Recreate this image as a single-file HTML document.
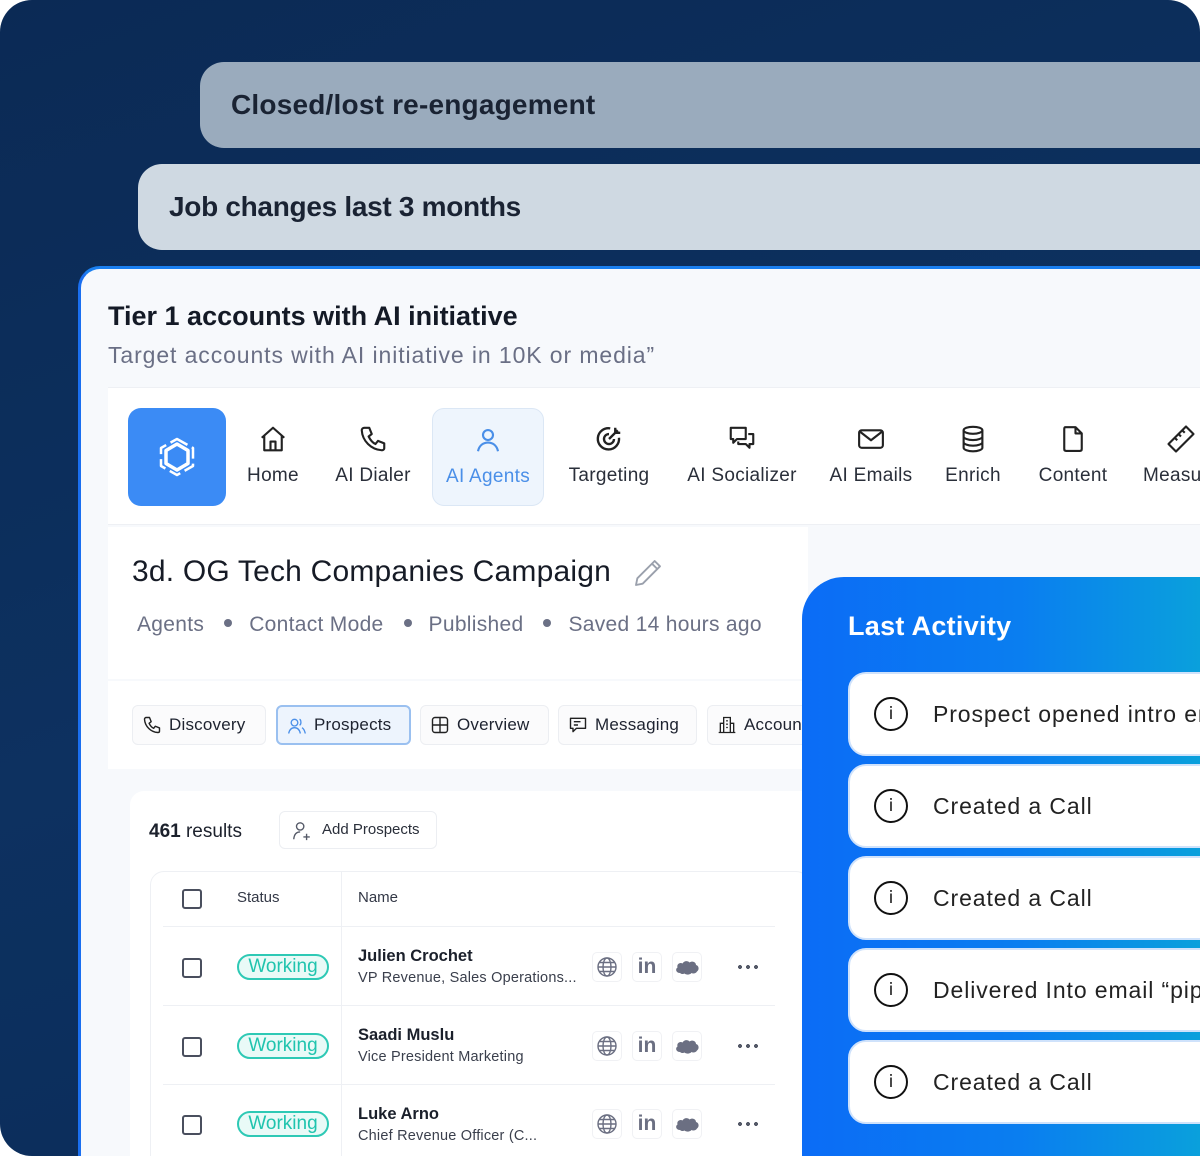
<!DOCTYPE html>
<html><head><meta charset="utf-8">
<style>
*{box-sizing:border-box;margin:0;padding:0}
body{width:1200px;height:1156px;overflow:hidden;background:#fff;font-family:"Liberation Sans",sans-serif;position:relative}
.frame{position:absolute;left:0;top:0;width:1200px;height:1156px;border-radius:32px;background:linear-gradient(160deg,#0b2a55 0%,#0d3160 50%,#0a2b58 100%);overflow:hidden}
.pill{position:absolute;height:86px;border-radius:24px 0 0 24px;font-size:28px;font-weight:700;color:#1a2333;padding-left:31px;line-height:86px;letter-spacing:0.2px}
.p1{left:200px;top:62px;width:1000px;background:#9aabbd}
.p2{left:138px;top:164px;width:1062px;background:#cfd9e2;letter-spacing:-0.3px}
.card{position:absolute;left:78px;top:266px;width:1122px;height:890px;border-radius:22px 0 0 0;background:#f7f9fc;border-left:3px solid #1a6ff0;border-top:3px solid #1a7ff0;overflow:hidden}
.t1{position:absolute;left:27px;top:32px;font-size:27px;font-weight:700;color:#141a26;letter-spacing:0px}
.t2{position:absolute;left:27px;top:73px;font-size:23px;color:#6a6f85;letter-spacing:0.9px}
.nav{position:absolute;left:27px;top:118px;width:1095px;height:138px;background:#fff;border-top:1px solid #eef0f4;border-bottom:1px solid #eef0f4;overflow:hidden}
.logo{position:absolute;left:20px;top:20px;width:98px;height:98px;border-radius:13px;background:#3b8bf5}
.ni{position:absolute;top:20px;height:98px;text-align:center;font-size:19px;color:#2a2f3a;letter-spacing:0.3px}
.ni svg{position:absolute;top:16px;left:50%;margin-left:-15px;width:30px;height:30px}
.ni span{position:absolute;top:57px;left:0;right:0;white-space:nowrap}
.act{background:#eef5fd;border:1px solid #dbe7f5;border-radius:12px;color:#4a8fe8}
.sec{position:absolute;left:27px;top:258px;width:700px;height:152px;background:#fff}
.ct{position:absolute;left:24px;top:28px;font-size:30px;font-weight:500;color:#161b26;letter-spacing:0.2px}
.meta{position:absolute;left:29px;top:86px;font-size:21px;color:#6b7085;white-space:nowrap;letter-spacing:0.3px}
.meta b{display:inline-block;width:8px;height:8px;border-radius:50%;background:#6b7085;margin:0 17px 0 20px;vertical-align:middle;position:relative;top:-2px}
.tabs{position:absolute;left:27px;top:412px;width:700px;height:88px;background:#fff}
.tab{position:absolute;top:24px;height:40px;border:1px solid #eceef2;border-radius:6px;background:#fbfbfc;font-size:17px;color:#1e2330;line-height:38px;padding-left:36px;white-space:nowrap;overflow:hidden;letter-spacing:0.2px}
.tab svg{position:absolute;left:9px;top:9px;width:20px;height:20px}
.tab.on{background:#edf4fd;border:2px solid #9ac0f0;line-height:36px}
.res{position:absolute;left:49px;top:522px;width:700px;height:368px;background:#fff;border-radius:14px 14px 0 0;overflow:hidden}
.rc{position:absolute;left:19px;top:30px;font-size:19px;color:#1c212c}
.addb{position:absolute;left:149px;top:20px;width:158px;height:38px;border:1px solid #eceef2;border-radius:6px;font-size:15px;color:#2a2f3a;line-height:36px;padding-left:42px}
.tbl{position:absolute;left:20px;top:80px;width:660px;height:400px;border:1px solid #eef0f4;border-radius:14px}
.cb{position:absolute;left:31px;width:20px;height:20px;border:2px solid #4a4f5e;border-radius:3px}
.hl{position:absolute;left:12px;width:612px;height:1px;background:#eef0f4}
.vl{position:absolute;left:190px;top:0;width:1px;height:400px;background:#eef0f4}
.wk{position:absolute;left:86px;width:92px;height:26px;border:2px solid #2ec9b5;border-radius:13px;background:#e9faf7;color:#20c4ae;font-size:19px;text-align:center;line-height:22px}
.nm{position:absolute;left:207px;font-size:16.5px;color:#1b202b;font-weight:700}
.sb{position:absolute;left:207px;font-size:14.5px;color:#3a3f4c;white-space:nowrap;letter-spacing:0.2px}
.ic{position:absolute;width:30px;height:30px;border:1px solid #f0f1f4;border-radius:5px;text-align:center}
.dt{position:absolute;left:146px;top:13px;width:20px;height:4px;background:radial-gradient(circle 2px at 2px 2px,#555a68 98%,transparent) 0 0/8px 4px repeat-x}
.la{position:absolute;left:802px;top:577px;width:398px;height:579px;border-radius:42px 0 0 0;background:linear-gradient(90deg,#0b6cf6 0%,#0a7ef0 55%,#0aa0dc 100%);overflow:hidden}
.lat{position:absolute;left:46px;top:34px;color:#fff;font-size:27px;font-weight:700;letter-spacing:0.3px}
.ac{position:absolute;left:46px;width:380px;height:84px;background:#fff;border-radius:18px;border:2px solid #cfe2fb;font-size:23px;color:#222;line-height:80px;padding-left:83px;white-space:nowrap;letter-spacing:0.9px;overflow:hidden}
.ac i{position:absolute;left:24px;top:23px;width:34px;height:34px;border:2px solid #111;border-radius:50%;font-style:normal;font-size:17px;line-height:30px;text-align:center;padding-left:0;color:#111;font-family:"DejaVu Sans",sans-serif;letter-spacing:0}
</style></head><body>
<div class="frame">
<div class="pill p1">Closed/lost re-engagement</div>
<div class="pill p2">Job changes last 3 months</div>
</div>
<div class="card">
<div class="t1">Tier 1 accounts with AI initiative</div>
<div class="t2">Target accounts with AI initiative in 10K or media”</div>
<div class="nav">
 <div class="logo"><svg width="98" height="98" viewBox="0 0 98 98"><g fill="none" stroke="#fff" stroke-width="3.5" stroke-linejoin="round"><polygon points="49,36 60,42.5 60,55.5 49,62 38,55.5 38,42.5"/><polygon points="49,31 65,40 65,58 49,67 33,58 33,40" stroke-width="2.5" stroke-dasharray="12 5"/></g></svg></div>
 <div class="ni" style="left:126px;width:78px"><svg viewBox="0 0 24 24" fill="none" stroke="#222" stroke-width="1.7" stroke-linejoin="round"><path d="M3 11 L12 3 L21 11 M5 9.5 V21 H19 V9.5 M10 21 V14 H14 V21"/></svg><span>Home</span></div>
 <div class="ni" style="left:222px;width:86px"><svg viewBox="0 0 24 24" fill="none" stroke="#222" stroke-width="1.7" stroke-linejoin="round"><path d="M5 3 L9 3 L11 8 L8.5 10 C10 13 11.5 15 14 16 L16 13.5 L21 15.5 V19.5 C21 20.5 20 21 19 21 C10.5 20.5 3.5 13.5 3 5 C3 4 4 3 5 3Z"/></svg><span>AI Dialer</span></div>
 <div class="ni act" style="left:324px;width:112px"><svg viewBox="0 0 24 24" fill="none" stroke="#4a8fe8" stroke-width="1.7"><circle cx="12" cy="8" r="4"/><path d="M4 21 C5 16 8.5 14 12 14 C15.5 14 19 16 20 21"/></svg><span>AI Agents</span></div>
 <div class="ni" style="left:456px;width:90px"><svg viewBox="0 0 24 24" fill="none" stroke="#222" stroke-width="1.9"><path d="M20 11 A8.5 8.5 0 1 1 13 3.5"/><path d="M16 12 A4 4 0 1 1 12 8"/><path d="M12 12 L19 5 M17 3 V7 H21"/></svg><span>Targeting</span></div>
 <div class="ni" style="left:574px;width:120px"><svg viewBox="0 0 24 24" fill="none" stroke="#222" stroke-width="1.7" stroke-linejoin="round"><path d="M3 3 H15 V12 H8 L5 15 V12 H3Z"/><path d="M9 14 V16 H15 L18 19 V16 H21 V8 H17"/></svg><span>AI Socializer</span></div>
 <div class="ni" style="left:718px;width:90px"><svg viewBox="0 0 24 24" fill="none" stroke="#222" stroke-width="1.7" stroke-linejoin="round"><rect x="2.5" y="5" width="19" height="14" rx="2"/><path d="M3 6 L12 13 L21 6"/></svg><span>AI Emails</span></div>
 <div class="ni" style="left:830px;width:70px"><svg viewBox="0 0 24 24" fill="none" stroke="#222" stroke-width="1.7"><ellipse cx="12" cy="5" rx="7.5" ry="2.8"/><path d="M4.5 5 V19 C4.5 20.5 8 21.8 12 21.8 C16 21.8 19.5 20.5 19.5 19 V5 M4.5 10 C4.5 11.5 8 12.8 12 12.8 C16 12.8 19.5 11.5 19.5 10 M4.5 14.5 C4.5 16 8 17.3 12 17.3 C16 17.3 19.5 16 19.5 14.5"/></svg><span>Enrich</span></div>
 <div class="ni" style="left:920px;width:90px"><svg viewBox="0 0 24 24" fill="none" stroke="#222" stroke-width="1.7" stroke-linejoin="round"><path d="M6 2.5 H14 L19 7.5 V20 C19 21 18.5 21.5 17.5 21.5 H6.5 C5.5 21.5 5 21 5 20 V4 C5 3 5.5 2.5 6 2.5Z M14 2.5 V7.5 H19"/></svg><span>Content</span></div>
 <div class="ni" style="left:1030px;width:65px;text-align:left;overflow:hidden"><svg viewBox="0 0 24 24" fill="none" stroke="#222" stroke-width="1.7" stroke-linejoin="round" style="left:28px;margin:0"><path d="M2 16 L16 2 L22 8 L8 22Z M7 11 L9 13 M10 8 L12 10 M13 5 L15 7"/></svg><span style="left:5px">Measu</span></div>
</div>
<div class="sec">
 <div class="ct">3d. OG Tech Companies Campaign</div>
 <svg style="position:absolute;left:524px;top:30px" width="32" height="32" viewBox="0 0 24 24" fill="none" stroke="#9aa0ac" stroke-width="1.4" stroke-linejoin="round"><path d="M3 21 L4 16 L17 3 L21 7 L8 20Z M15 5 L19 9"/></svg>
 <div class="meta">Agents<b></b>Contact Mode<b></b>Published<b></b>Saved 14 hours ago</div>
</div>
<div class="tabs">
 <div class="tab" style="left:24px;width:134px"><svg viewBox="0 0 24 24" fill="none" stroke="#222" stroke-width="1.7" stroke-linejoin="round"><path d="M5 3 L9 3 L11 8 L8.5 10 C10 13 11.5 15 14 16 L16 13.5 L21 15.5 V19.5 C21 20.5 20 21 19 21 C10.5 20.5 3.5 13.5 3 5 C3 4 4 3 5 3Z"/></svg>Discovery</div>
 <div class="tab on" style="left:168px;width:135px"><svg viewBox="0 0 24 24" fill="none" stroke="#4a8fe8" stroke-width="1.6"><circle cx="9" cy="8" r="4"/><path d="M2 21 C3 16 5.5 14 9 14 C12.5 14 15 16 16 21 M15 4 C17 4.5 17.5 10 15 11 M18 14 C20 15 21 17 22 21"/></svg>Prospects</div>
 <div class="tab" style="left:312px;width:129px"><svg viewBox="0 0 24 24" fill="none" stroke="#222" stroke-width="1.7"><rect x="3" y="3" width="18" height="18" rx="3"/><path d="M12 3 V21 M3 12 H21"/></svg>Overview</div>
 <div class="tab" style="left:450px;width:139px"><svg viewBox="0 0 24 24" fill="none" stroke="#222" stroke-width="1.7" stroke-linejoin="round"><path d="M3 4 H21 V16 H10 L6 20 V16 H3Z M7 8 H15 M7 12 H12"/></svg>Messaging</div>
 <div class="tab" style="left:599px;width:101px"><svg viewBox="0 0 24 24" fill="none" stroke="#222" stroke-width="1.6"><path d="M2 21 H22 M4 21 V10 H8 M8 21 V3 H16 V21 M16 10 H20 V21 M11 7 H13 M11 11 H13 M11 15 H13"/></svg>Accounts</div>
</div>
<div class="res">
 <div class="rc"><b style="font-weight:700">461</b> results</div>
 <div class="addb"><svg style="position:absolute;left:11px;top:8px" width="22" height="22" viewBox="0 0 24 24" fill="none" stroke="#555a68" stroke-width="1.5"><circle cx="10" cy="7" r="4"/><path d="M3 21 C3.5 15 6.5 13 10 13 M17 15 V22 M13.5 18.5 H20.5"/></svg>Add Prospects</div>
 <div class="tbl">
  <div class="vl"></div>
  <div class="cb" style="top:17px"></div>
  <div style="position:absolute;left:86px;top:17px;font-size:15px;color:#333846">Status</div>
  <div style="position:absolute;left:207px;top:17px;font-size:15px;color:#333846">Name</div>
  <div class="hl" style="top:54px"></div>
  <div class="hl" style="top:133px"></div>
  <div class="hl" style="top:212px"></div>

  <div class="cb" style="top:86px"></div><div class="wk" style="top:82px">Working</div>
  <div class="nm" style="top:75px">Julien Crochet</div><div class="sb" style="top:98px">VP Revenue, Sales Operations...</div>
  <div class="cb" style="top:165px"></div><div class="wk" style="top:161px">Working</div>
  <div class="nm" style="top:154px">Saadi Muslu</div><div class="sb" style="top:177px">Vice President Marketing</div>
  <div class="cb" style="top:243px"></div><div class="wk" style="top:239px">Working</div>
  <div class="nm" style="top:233px">Luke Arno</div><div class="sb" style="top:256px">Chief Revenue Officer (C...</div>
 </div>
</div>
</div>

<div style="position:absolute;left:0;top:0">
<div style="position:absolute;left:592px;top:952px">
 <div class="ic" style="left:0;top:0"><svg width="24" height="24" viewBox="0 0 24 24" style="margin-top:2px" fill="none" stroke="#6b6f82" stroke-width="1.4"><circle cx="12" cy="12" r="9"/><ellipse cx="12" cy="12" rx="4" ry="9"/><path d="M3 12 H21 M4.5 7.5 H19.5 M4.5 16.5 H19.5"/></svg></div>
 <div class="ic" style="left:40px;top:0;font-weight:700;font-size:21px;color:#6b6f82;line-height:28px">in</div>
 <div class="ic" style="left:80px;top:0"><svg width="26" height="20" viewBox="0 0 26 20" style="margin-top:4px"><path d="M6 16 C2 16 1 12 3.5 10.5 C2.5 7 6 5 8.5 6.5 C10 3.5 14 3.5 15.5 5.5 C18 3.5 22 5 22 8 C25 8.5 25.5 13 23 14.5 C22 16.5 19 17 17.5 16 C16 18 12 18 10.5 16.5 C9 17.5 7 17 6 16Z" fill="#6b6f82"/></svg></div>
 <div class="dt"></div>
</div>
<div style="position:absolute;left:592px;top:1031px">
 <div class="ic" style="left:0;top:0"><svg width="24" height="24" viewBox="0 0 24 24" style="margin-top:2px" fill="none" stroke="#6b6f82" stroke-width="1.4"><circle cx="12" cy="12" r="9"/><ellipse cx="12" cy="12" rx="4" ry="9"/><path d="M3 12 H21 M4.5 7.5 H19.5 M4.5 16.5 H19.5"/></svg></div>
 <div class="ic" style="left:40px;top:0;font-weight:700;font-size:21px;color:#6b6f82;line-height:28px">in</div>
 <div class="ic" style="left:80px;top:0"><svg width="26" height="20" viewBox="0 0 26 20" style="margin-top:4px"><path d="M6 16 C2 16 1 12 3.5 10.5 C2.5 7 6 5 8.5 6.5 C10 3.5 14 3.5 15.5 5.5 C18 3.5 22 5 22 8 C25 8.5 25.5 13 23 14.5 C22 16.5 19 17 17.5 16 C16 18 12 18 10.5 16.5 C9 17.5 7 17 6 16Z" fill="#6b6f82"/></svg></div>
 <div class="dt"></div>
</div>
<div style="position:absolute;left:592px;top:1109px">
 <div class="ic" style="left:0;top:0"><svg width="24" height="24" viewBox="0 0 24 24" style="margin-top:2px" fill="none" stroke="#6b6f82" stroke-width="1.4"><circle cx="12" cy="12" r="9"/><ellipse cx="12" cy="12" rx="4" ry="9"/><path d="M3 12 H21 M4.5 7.5 H19.5 M4.5 16.5 H19.5"/></svg></div>
 <div class="ic" style="left:40px;top:0;font-weight:700;font-size:21px;color:#6b6f82;line-height:28px">in</div>
 <div class="ic" style="left:80px;top:0"><svg width="26" height="20" viewBox="0 0 26 20" style="margin-top:4px"><path d="M6 16 C2 16 1 12 3.5 10.5 C2.5 7 6 5 8.5 6.5 C10 3.5 14 3.5 15.5 5.5 C18 3.5 22 5 22 8 C25 8.5 25.5 13 23 14.5 C22 16.5 19 17 17.5 16 C16 18 12 18 10.5 16.5 C9 17.5 7 17 6 16Z" fill="#6b6f82"/></svg></div>
 <div class="dt"></div>
</div>
</div>

<div class="la">
 <div class="lat">Last Activity</div>
 <div class="ac" style="top:95px"><i>i</i>Prospect opened intro email</div>
 <div class="ac" style="top:187px"><i>i</i>Created a Call</div>
 <div class="ac" style="top:279px"><i>i</i>Created a Call</div>
 <div class="ac" style="top:371px"><i>i</i>Delivered Into email “pipeline”</div>
 <div class="ac" style="top:463px"><i>i</i>Created a Call</div>
</div>
</body></html>
